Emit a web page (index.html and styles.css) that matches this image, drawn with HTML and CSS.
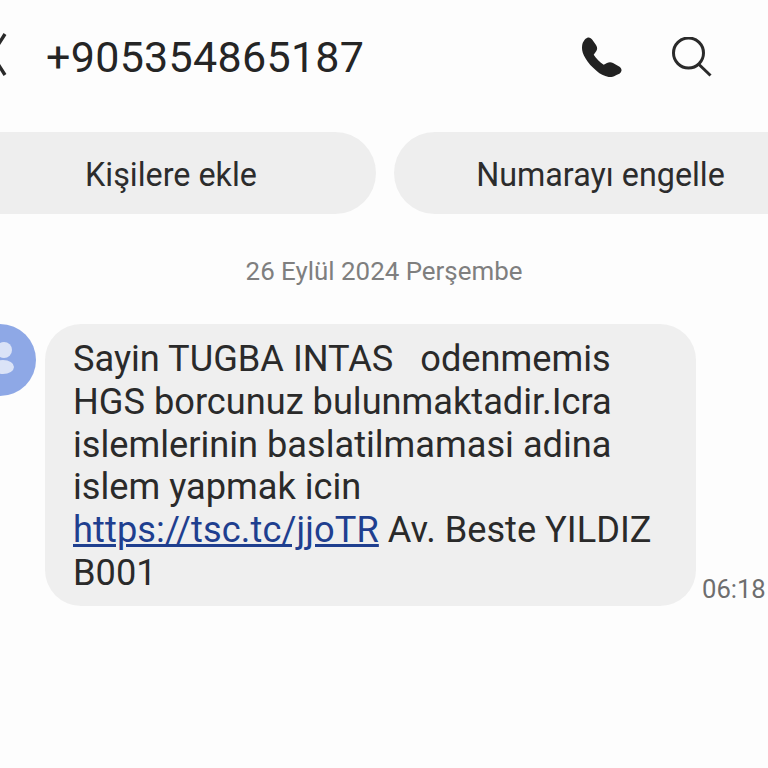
FILE: index.html
```html
<!DOCTYPE html>
<html lang="tr">
<head>
    <meta charset="UTF-8">
    <meta name="viewport" content="width=device-width, initial-scale=1.0">
    <title>Mesajlar</title>
    <link rel="stylesheet" href="styles.css">
</head>
<body>

<div class="topbar">
    <svg class="back" width="12" height="48" viewBox="0 0 12 48"><path d="M5 1 L-8 21.500 L5 42" fill="none" stroke="#2a2a2a" stroke-width="3.400"/></svg>
    <h1 class="number">+905354865187</h1>
    <svg class="call" width="40" height="40" viewBox="0 0 40 40"><path d="M5 1 C7 0 9 1 10.500 3 L14 8 C15.500 10.500 15.500 12.500 14 14.500 L11.700 17.700 C14 21.500 18 25.500 21.700 27.700 L25 26 C27 25 29 25 31 26 L36.700 29.300 C39 30.700 40 32.500 39.300 34.300 C38.500 36.500 36.500 37.500 35 37.700 C32 39.500 29 40.500 26.700 40 C22 39 18 37 15 34.300 C10 30 6 26 3.300 21 C1 17 0 14 0 11 C0 8 0.500 6 1.700 4.300 C2.500 2.700 3.500 1.500 5 1 Z" fill="#222"/></svg>
    <svg class="search" width="40" height="40" viewBox="0 0 40 40"><circle cx="16.500" cy="16" r="15" fill="none" stroke="#2a2a2a" stroke-width="3"/><path d="M26.500 27 L38.500 38.500" stroke="#2a2a2a" stroke-width="3" fill="none"/></svg>
</div>

<div class="actions">
    <button class="pill pill-add">Kişilere ekle</button>
    <button class="pill pill-block">Numarayı engelle</button>
</div>

<div class="date">26 Eylül 2024 Perşembe</div>

<div class="message-row">
    <div class="avatar">
        <svg width="36" height="72" viewBox="0 0 36 72"><circle cx="4" cy="26" r="8" fill="#dbe3f7"/><ellipse cx="3" cy="43" rx="11" ry="7" fill="#dbe3f7"/></svg>
    </div>
    <div class="bubble">Sayin TUGBA INTAS&nbsp;&nbsp; odenmemis<br>HGS borcunuz bulunmaktadir.Icra<br>islemlerinin baslatilmamasi adina<br>islem yapmak icin<br><a href="#">https://tsc.tc/jjoTR</a> Av. Beste YILDIZ<br>B001</div>
    <div class="time">06:18</div>
</div>

</body>
</html>
```

FILE: styles.css
```css
body { margin: 0; height: 768px; overflow: hidden; background: #fdfdfd; font-family: Roboto, sans-serif; color: #252525; }

.topbar { display: flex; align-items: center; height: 48px; padding-top: 33px; }
.back { margin-right: 34px; flex: none; }
.number { margin: 0; font-size: 43px; font-weight: 400; width: 536px; letter-spacing: 0.3px; flex: none; }
.search { margin-left: 50px; }

.actions { display: flex; gap: 18px; margin-top: 51px; overflow: hidden; }
.pill { height: 82px; flex: none; border: none; border-radius: 41px; background: #eeeeee; font-family: Roboto, sans-serif; font-size: 32.300px; color: #2c2c2c; padding: 4px 0 0; }
.pill-add { width: 416px; margin-left: -40px; padding-left: 6px; }
.pill-block { width: 413px; }

.date { text-align: center; font-size: 25.900px; color: #7f7f7f; margin-top: 43px; line-height: 28px; }

.message-row { display: flex; align-items: flex-start; margin-top: 39px; }
.avatar { width: 36px; height: 72px; margin-right: 9px; background: #8ea8e6; border-radius: 0 36px 36px 0; flex: none; }
.bubble { width: 651px; box-sizing: border-box; padding: 14px 20px 0 28px; height: 282px; background: #efefef; border-radius: 36px; font-size: 36.200px; line-height: 42.800px; color: #2a2a2a; white-space: nowrap; flex: none; }
.bubble a { color: #1f3f8f; letter-spacing: 0.1px; }
.time { align-self: flex-end; margin-left: 6px; font-size: 25.600px; color: #6e6e6e; line-height: 30px; margin-bottom: 2px; white-space: nowrap; }
```
